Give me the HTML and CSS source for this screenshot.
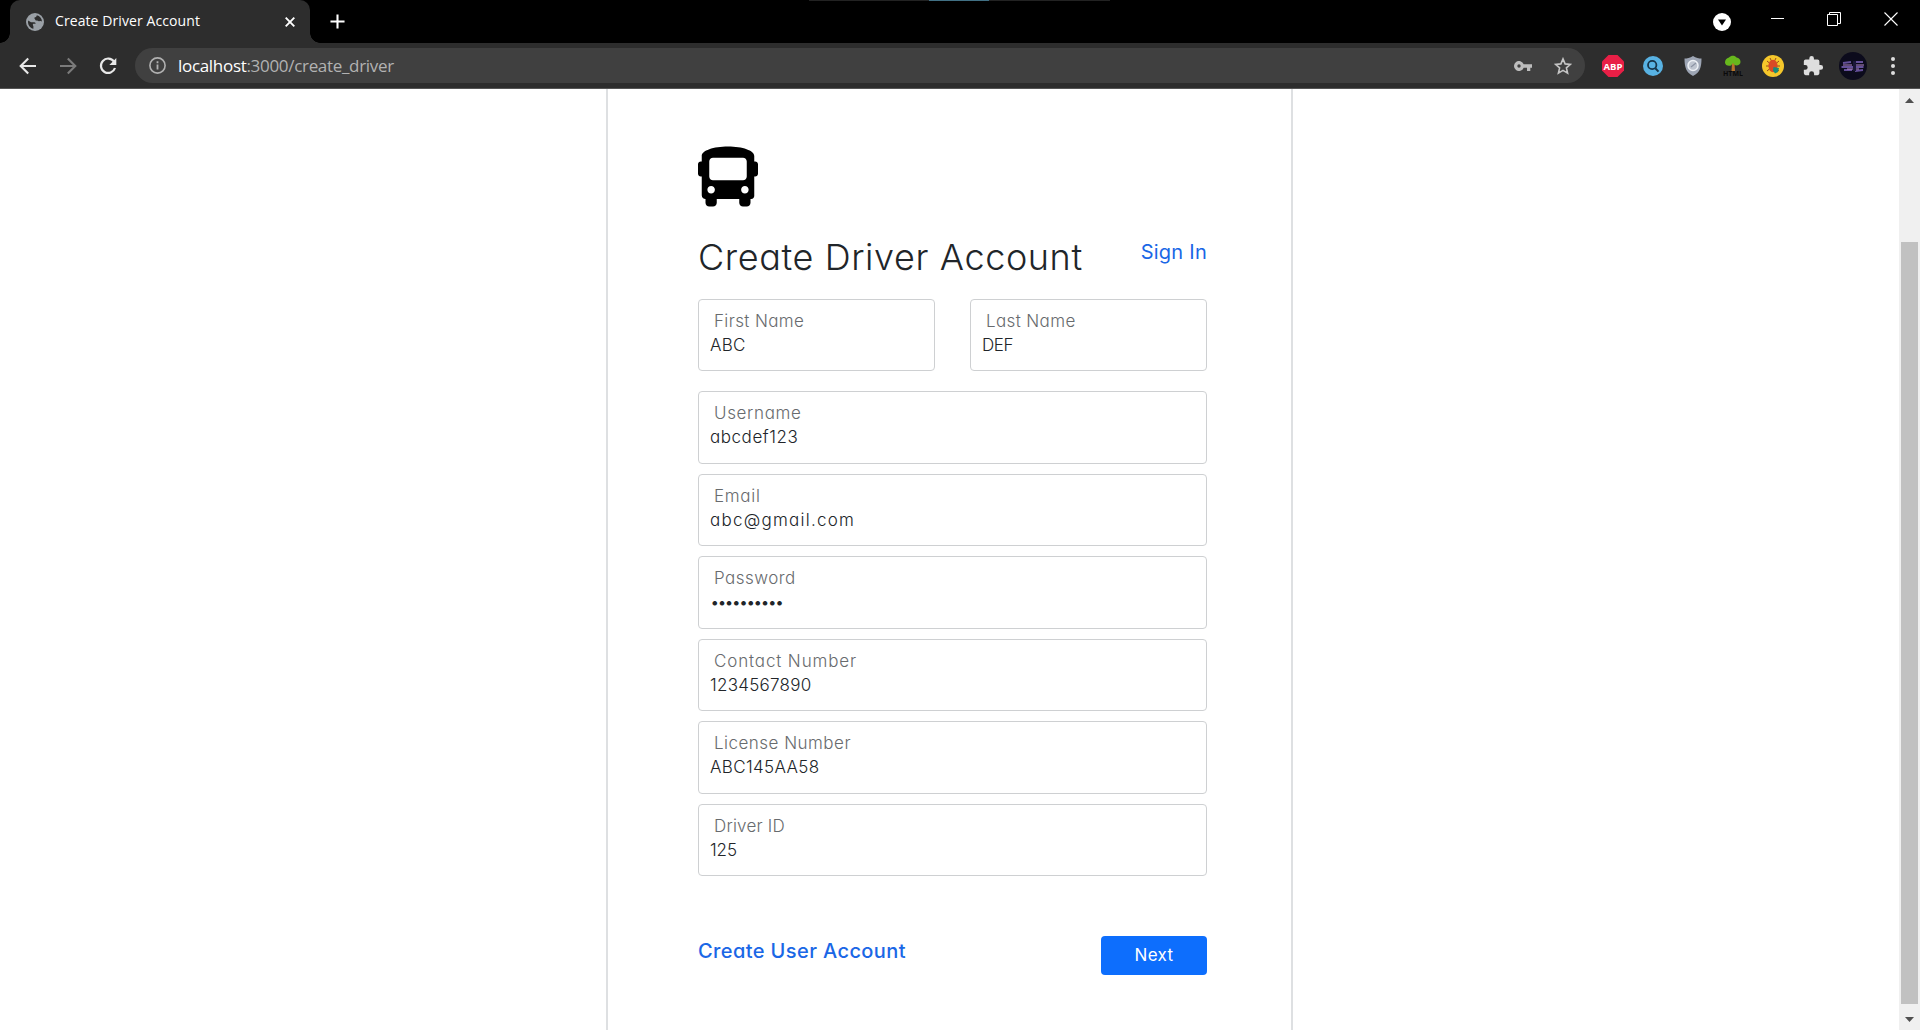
FILE: index.html
```html
<!DOCTYPE html>
<html lang="en">
<head>
<meta charset="utf-8">
<title>Create Driver Account</title>
<link rel="stylesheet" href="styles.css">
</head>
<body>
<header class="browser">
  <div class="tabstrip">
    <div class="tab">
      <svg class="globe" viewBox="0 0 18 18"><circle cx="9" cy="9" r="9" fill="#9aa0a6"/><path d="M2.200 7.500 5 9.200h3.300c1 0 1.300.8 1.300 1.600H7.800c-.7 0-1 .5-1 1.200l.6 1.300v2.400C4.500 15.300 2 12.500 2 9zM10.800 2.300c-.2 1-.6 1.700-1.500 1.900-1 .2-1.300.9-.5 1.700.6.600.4 1.500 1.700 1.700 1.300.1 1.800.9 2.700.6 1-.4 2.300-.4 2.800.3C15.800 5.500 13.800 2.900 10.800 2.300z" fill="#2d2d2d"/></svg>
      <span class="tab-title">Create Driver Account</span>
      <svg class="tab-close" viewBox="0 0 10 10"><path d="M.7.7l8.600 8.600M9.300.7.7 9.300" stroke="#fff" stroke-width="1.900"/></svg>
    </div>
    <svg class="plus" viewBox="0 0 16 16"><path d="M8 .5v15M.5 8h15" stroke="#fff" stroke-width="2.200"/></svg>
    <div class="edge-strip"></div>
    <div class="window-controls">
      <svg width="18" height="18" viewBox="0 0 18 18" class="media"><circle cx="9" cy="9" r="9" fill="#fff"/><path d="M5 6.500h8l-4 6z" fill="#000"/></svg>
      <svg width="14" height="14" viewBox="0 0 14 14"><path d="M0 6.500h13" stroke="#fff"/></svg>
      <svg width="14" height="14" viewBox="0 0 14 14"><path d="M.5 2.500h10v11H.5zM2.500 2.500V.5h11v11h-3" fill="none" stroke="#fff"/></svg>
      <svg class="close" width="14" height="14" viewBox="0 0 14 14"><path d="M.5.5l13 13M13.500.5l-13 13" stroke="#fff" stroke-width="1.100"/></svg>
    </div>
  </div>
  <div class="toolbar">
    <svg class="nav" viewBox="0 0 18 18"><path d="M17 9H2M9.200 1.500 1.700 9l7.500 7.500" fill="none" stroke="#e8e8e8" stroke-width="2.100"/></svg>
    <svg class="nav" viewBox="0 0 18 18"><path d="M1 9h15M8.800 1.500 16.300 9l-7.500 7.500" fill="none" stroke="#7b7b7b" stroke-width="2.100"/></svg>
    <svg class="nav" viewBox="0 0 18 18"><path d="M15 4.500A7.200 7.200 0 1 0 16 11" fill="none" stroke="#e8e8e8" stroke-width="2.200"/><path d="M17.300 1v7h-7z" fill="#e8e8e8"/></svg>
    <div class="omnibox">
      <svg class="info" viewBox="0 0 17 17"><circle cx="8.500" cy="8.500" r="7.600" fill="none" stroke="#b0b0b0" stroke-width="1.600"/><path d="M8.500 7.500v5M8.500 4.300v2" stroke="#b0b0b0" stroke-width="1.800"/></svg>
      <span class="url"><b>localhost</b>:3000/create_driver</span>
      <svg class="key" viewBox="0 0 18 10"><path d="M9.700 3.300a5 5 0 1 0 0 3.400H13V10h3.300V6.700H18V3.300zM5 6.700A1.700 1.700 0 1 1 5 3.300a1.700 1.700 0 0 1 0 3.400z" fill="#bdbdbd"/></svg>
      <svg class="star" viewBox="0 0 18 18"><path d="M9 1.900l2.100 5 5.300.500-4 3.500 1.200 5.300L9 13.400l-4.600 2.800 1.200-5.300-4-3.500 5.300-.500z" fill="none" stroke="#c4c4c4" stroke-width="1.600"/></svg>
    </div>
    <div class="extensions">
      <svg width="22" height="22" viewBox="0 0 22 22"><path d="M6.500 0h9L22 6.500v9L15.500 22h-9L0 15.500v-9z" fill="#e81f46"/><text x="11" y="14.800" class="abp">ABP</text></svg>
      <svg width="20" height="20" viewBox="0 0 20 20"><circle cx="10" cy="10" r="10" fill="#58b2e3"/><circle cx="9.200" cy="9" r="4.200" fill="none" stroke="#17354a" stroke-width="1.800"/><path d="M12.300 12.200l3.200 3.400" stroke="#17354a" stroke-width="2"/></svg>
      <svg width="18" height="20" viewBox="0 0 18 20"><path d="M9 0c3 2 6 2.500 8.500 2.500C17.500 11 16 16.500 9 20 2 16.500.5 11 .5 2.500 3 2.500 6 2 9 0z" fill="#9da5b4"/><circle cx="9" cy="9.500" r="5" fill="#bfc5d0" stroke="#edf0f5" stroke-width="1.500"/><path d="M7 11l5-4" stroke="#8b93a3" stroke-width="1.200"/></svg>
      <svg width="20" height="22" viewBox="0 0 20 22"><path d="M9 8h2.500l.5 8H8.500z" fill="#b8742b"/><path d="M6 2.500C8 0 12 0 13.500 2.500 16 3 17.500 4.500 17.500 7c0 3-3.500 4-6 3L10 8 8 10.500C5 11.500 2 10 2 7.500 2 5 3.500 3 6 2.500z" fill="#67b81d"/><text x="10" y="20.500" class="html-tag">HTML</text></svg>
      <svg width="22" height="22" viewBox="0 0 22 22"><circle cx="11" cy="11" r="11" fill="#f5c72b"/><path d="M5 6l12 10M17 6 5 16M4 11h14M8 3l2 4M14 3l-2 4" stroke="#9a4a1d"/><ellipse cx="11" cy="11" rx="4.500" ry="6.200" fill="#d94a26"/><path d="M11.500 12l5.500 1-1 4-3 1.500-2-3z" fill="#188b78"/></svg>
      <svg width="22" height="22" viewBox="0 0 24 24"><path d="M20.500 11H19V7a2 2 0 0 0-2-2h-4V3.500a2.500 2.500 0 0 0-5 0V5H4a2 2 0 0 0-2 2v3.800h1.500a2.700 2.700 0 0 1 0 5.400H2V20a2 2 0 0 0 2 2h3.800v-1.500a2.700 2.700 0 0 1 5.400 0V22H17a2 2 0 0 0 2-2v-4h1.500a2.500 2.500 0 0 0 0-5z" fill="#dedede"/></svg>
      <svg width="28" height="28" viewBox="0 0 28 28"><circle cx="14" cy="14" r="14" fill="#0c0b1c"/><path d="M4 11l8-1M14 10h10M2.500 15h22M5 18h8M16 19l8-1" stroke="#65509a" stroke-width="2"/><path d="M4 13h9M17 13h8M8 17h12" stroke="#b78cc9"/><path d="M14 9h3v10h-3z" fill="#1b1738"/></svg>
      <svg width="4" height="18" viewBox="0 0 4 18"><circle cx="2" cy="2" r="2" fill="#ddd"/><circle cx="2" cy="9" r="2" fill="#ddd"/><circle cx="2" cy="16" r="2" fill="#ddd"/></svg>
    </div>
  </div>
</header>
<div class="viewport">
  <main class="page">
    <form class="card">
      <svg class="bus" viewBox="0 0 512 512"><path d="M488 128h-8V80c0-44.800-99.200-80-224-80S32 35.200 32 80v48h-8c-13.250 0-24 10.740-24 24v80c0 13.250 10.750 24 24 24h8v160c0 17.670 14.330 32 32 32v32c0 17.670 14.330 32 32 32h32c17.670 0 32-14.330 32-32v-32h192v32c0 17.670 14.330 32 32 32h32c17.670 0 32-14.330 32-32v-32h6.400c16 0 25.600-12.800 25.600-25.600V256h8c13.250 0 24-10.750 24-24v-80c0-13.260-10.750-24-24-24zM112 400c-17.670 0-32-14.330-32-32s14.330-32 32-32 32 14.330 32 32-14.330 32-32 32zm16-112c-17.670 0-32-14.330-32-32V128c0-17.670 14.330-32 32-32h256c17.670 0 32 14.330 32 32v128c0 17.670-14.330 32-32 32H128zm272 112c-17.670 0-32-14.330-32-32s14.330-32 32-32 32 14.330 32 32-14.330 32-32 32z"/></svg>
      <div class="title-row"><h1>Create Driver Account</h1><a class="sign-in">Sign In</a></div>
      <div class="name-row">
        <div class="field first-name"><label>First Name</label><div class="value">ABC</div></div>
        <div class="field last-name"><label>Last Name</label><div class="value">DEF</div></div>
      </div>
      <div class="fields">
        <div class="field username"><label>Username</label><div class="value">abcdef123</div></div>
        <div class="field email"><label>Email</label><div class="value">abc@gmail.com</div></div>
        <div class="field password"><label>Password</label><div class="value">••••••••••</div></div>
        <div class="field contact"><label>Contact Number</label><div class="value">1234567890</div></div>
        <div class="field license"><label>License Number</label><div class="value">ABC145AA58</div></div>
        <div class="field driver-id"><label>Driver ID</label><div class="value">125</div></div>
      </div>
      <div class="actions"><a class="user-link">Create User Account</a><button type="button" class="next">Next</button></div>
    </form>
  </main>
  <div class="scrollbar">
    <svg width="9" height="5" viewBox="0 0 9 5"><path d="M0 5 4.500 0 9 5z" fill="#505050"/></svg>
    <div class="thumb"></div>
    <svg width="9" height="5" viewBox="0 0 9 5"><path d="M0 0h9L4.500 5z" fill="#505050"/></svg>
  </div>
</div>
</body>
</html>
```
FILE: styles.css
```css
* { box-sizing: border-box; }
body { margin: 0; height: 1030px; overflow: hidden; display: flex; flex-direction: column; background: #fff; font-family: Inter, "Noto Sans", sans-serif; color: #212529; }
svg { display: block; flex: none; }

.browser { flex: none; height: 89px; background: #2d2d2d; border-bottom: 1px solid #555; font-family: "Open Sans", "Noto Sans", sans-serif; }
.tabstrip { height: 43px; background: #000; display: flex; align-items: center; position: relative; }
.tab { width: 300px; height: 43px; margin-left: 10px; padding: 0 15px 0 16px; display: flex; align-items: center; background: #2d2d2d; border-radius: 10px 10px 0 0; position: relative; }
.tab::before, .tab::after { content: ""; position: absolute; bottom: 0; width: 10px; height: 10px; }
.tab::before { left: -10px; background: radial-gradient(circle at 0 0, #000 9.5px, #2d2d2d 10px); }
.tab::after { right: -10px; background: radial-gradient(circle at 100% 0, #000 9.5px, #2d2d2d 10px); }
.globe { width: 18px; height: 18px; }
.tab-title { margin-left: 11px; font-size: 14px; line-height: 20px; letter-spacing: .09px; color: #fff; white-space: nowrap; position: relative; top: -1px; }
.tab-close { width: 10px; height: 10px; margin-left: auto; }
.plus { width: 15px; height: 15px; margin-left: 20px; }
.edge-strip { position: absolute; left: 809px; top: 0; width: 301px; height: 1px; background: linear-gradient(90deg, #222 120px, #417084 120px 180px, #222 180px); }
.window-controls { margin-left: auto; display: flex; align-items: center; gap: 42px; padding: 0 22px 6px 0; }
.window-controls .media { position: relative; top: 3px; margin-right: -2px; }
.window-controls .close { margin-left: 1px; }

.toolbar { height: 45px; display: flex; align-items: center; padding: 0 7px 0 19px; }
.nav { width: 18px; height: 18px; margin-right: 22px; }
.omnibox { width: 1450px; height: 35px; margin-left: -4px; padding: 0 13px 0 14px; border-radius: 18px; background: #404040; display: flex; align-items: center; }
.info { width: 17px; height: 17px; }
.url { margin-left: 12px; font-size: 17px; line-height: 24px; letter-spacing: -.31px; color: #b2b2b2; white-space: nowrap; }
.url b { font-weight: 400; color: #fff; }
.key { width: 18px; height: 10px; margin-left: auto; }
.star { width: 18px; height: 18px; margin-left: 22px; }
.extensions { display: grid; grid-template-columns: repeat(8, 40px); justify-items: center; align-items: center; margin-left: 8px; }
.abp { font: 700 9.5px "Open Sans", sans-serif; fill: #fff; text-anchor: middle; }
.html-tag { font: 700 7px "Open Sans", sans-serif; fill: #0a0a0a; text-anchor: middle; }

.viewport { flex: 1; min-height: 0; display: flex; }
.page { flex: 1; padding-left: 606px; }
.card { width: 687px; height: 100%; padding: 57px 84px 0 90px; border: solid #dee0e2; border-width: 0 2px; font-feature-settings: "cv11"; }
.bus { width: 60px; height: 61px; }
.title-row { display: flex; justify-content: space-between; height: 67px; margin-top: 25px; white-space: nowrap; }
h1 { margin: 0; font-size: 36px; line-height: 50px; font-weight: 350; letter-spacing: .6px; }
.sign-in { margin-top: 5px; font-size: 20px; line-height: 30px; letter-spacing: .25px; color: #1a67e6; }
.name-row { display: flex; gap: 35px; }
.name-row .field { flex: 1; height: 72px; }
.fields { display: flex; flex-direction: column; gap: 10px; margin-top: 20.3px; }
.field { height: 72.5px; padding: 9px 11px; border: 1px solid #ced0d2; border-radius: 4px; white-space: nowrap; }
.field label { display: block; padding-left: 4px; font-size: 17px; line-height: 24px; font-weight: 300; color: #686b6e; }
.value { font-size: 17px; line-height: 24px; font-weight: 350; }
.first-name label, .last-name label { letter-spacing: .37px; }
.first-name .value { letter-spacing: .3px; }
.last-name .value { letter-spacing: -.45px; }
.username label { letter-spacing: .65px; }
.username .value { letter-spacing: .55px; }
.email label { letter-spacing: .7px; }
.email .value { letter-spacing: 1.25px; }
.password label { letter-spacing: .45px; }
.password .value { letter-spacing: -2.38px; }
.contact label { letter-spacing: .86px; }
.contact .value { letter-spacing: .27px; }
.license label { letter-spacing: .48px; }
.license .value { letter-spacing: .35px; }
.driver-id label { letter-spacing: .2px; }
.driver-id .value { letter-spacing: -.1px; }
.actions { display: flex; justify-content: space-between; align-items: flex-start; margin-top: 59.6px; }
.user-link { font-size: 20px; line-height: 30px; font-weight: 500; letter-spacing: .4px; color: #1a67e6; }
.next { width: 106px; height: 39px; padding: 0; border: 0; border-radius: 4px; background: #0d6efd; color: #fff; font: 400 17px/38px Inter, sans-serif; letter-spacing: .35px; }

.scrollbar { width: 21px; background: #f0f0f0; display: flex; flex-direction: column; align-items: center; padding: 9px 0 8px; }
.thumb { width: 17px; height: 762px; margin: 139px 0 auto; background: #c1c1c1; }
```
